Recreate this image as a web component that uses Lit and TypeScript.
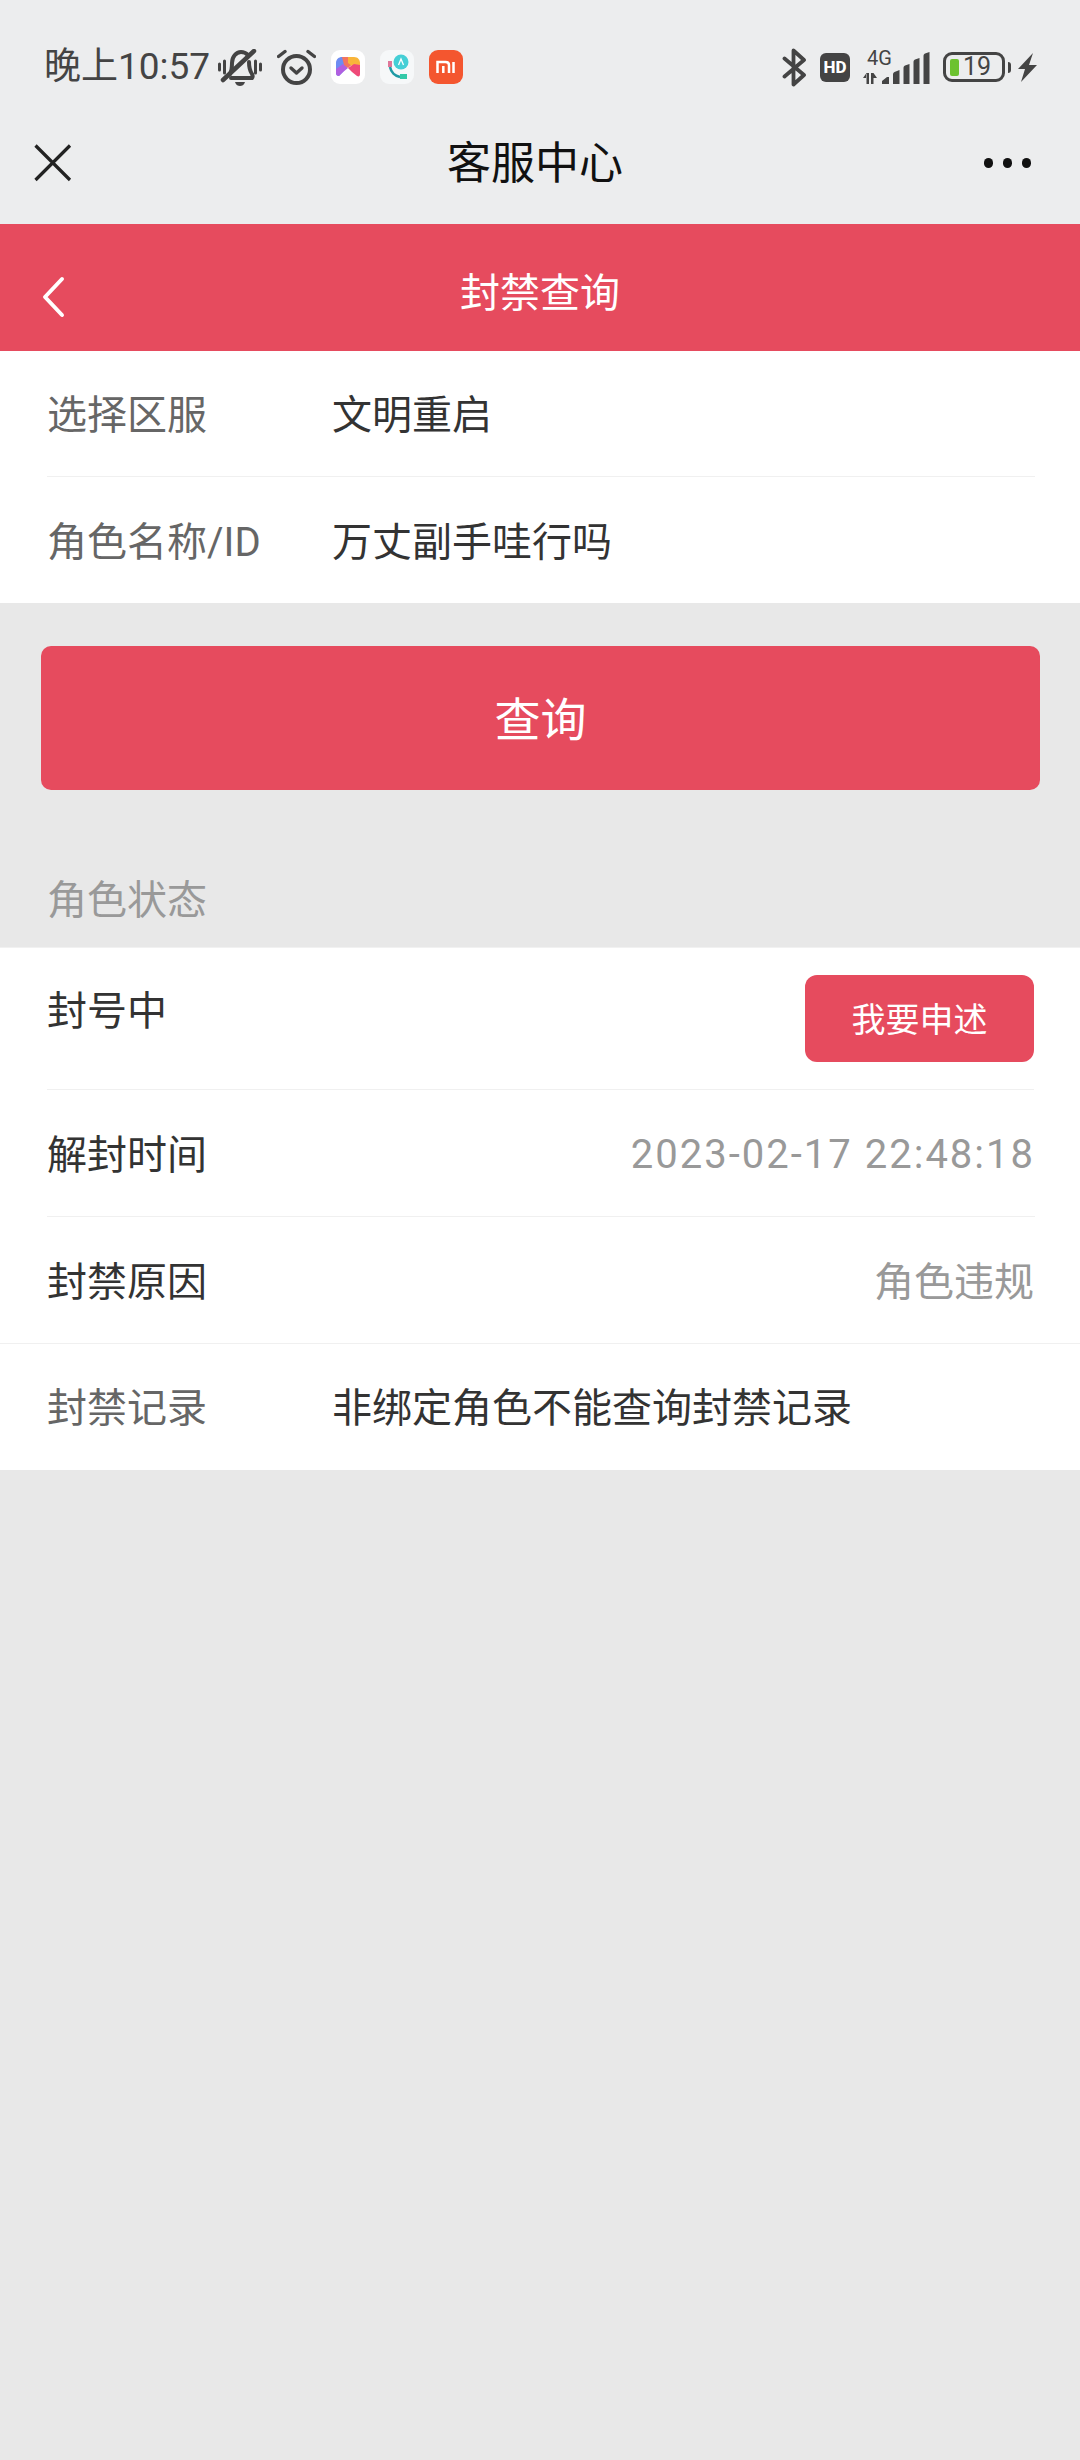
import { LitElement, html, css, svg } from 'lit';
import { customElement } from 'lit/decorators.js';

const statusRows = [
  { label: '解封时间', value: '2023-02-17 22:48:18', cls: 'date' },
  { label: '封禁原因', value: '角色违规', cls: '' },
];

const bellOff = svg`<svg class="ic" width="44" height="37" viewBox="0 0 44 37" fill="none" stroke="#444" stroke-linecap="round">
  <path d="M1.500 15v6M6.500 12v12M37.500 12v12M42.500 15v6" stroke-width="3"/>
  <path d="M12 25c2-4 2-7 2-11 0-6 4-11 9-11 3 0 5 1 7 3M31 13c0 5 1 9 3 12 1 2 1 3 0 4H13" stroke-width="4"/>
  <path d="M5 31 36 2" stroke-width="4.500"/>
  <path d="M17 33h10c-1 3-3 4-5 4s-4-1-5-4z" fill="#444" stroke="none"/>
</svg>`;

const alarm = svg`<svg class="ic" width="39" height="36" viewBox="0 0 39 36" fill="none" stroke="#444" stroke-linecap="round" stroke-linejoin="round">
  <circle cx="19.500" cy="20.500" r="13.500" stroke-width="4"/>
  <path d="M1.500 7.500 8 2.500M37.500 7.500 31 2.500" stroke-width="3.400"/>
  <path d="M14 19l5.500 5 5.500-5" stroke-width="3.400"/>
</svg>`;

const gameApp = svg`<svg class="ic" width="34" height="34" viewBox="0 0 34 34">
  <rect width="34" height="34" rx="9" fill="#fff"/>
  <path d="M5 13c0-4 3-6 6-6h3l2 10-4 5-4 4c-2 0-3-1-3-3z" fill="#6d8cf2"/>
  <path d="M5 19l7-5 5 4-5 4-4 4c-2 0-3-1-3-3z" fill="#b05fe0"/>
  <path d="M11 7h9l3 6-6 5-4-3z" fill="#f3745f"/>
  <path d="M17 7h6c4 0 6 3 6 6v2l-8 1-4-3z" fill="#f9b53a"/>
  <path d="M17 18l6-4 6 1v9c0 2-1 3-3 2l-5-4z" fill="#ef4a78"/>
</svg>`;

const phoneApp = svg`<svg class="ic" width="34" height="34" viewBox="0 0 34 34" fill="none">
  <rect width="34" height="34" rx="9" fill="#f6f8f9"/>
  <circle cx="21" cy="12" r="7.500" fill="#45cfd6"/>
  <path d="M18.500 15l2.500-6 2.500 6" stroke="#fff" stroke-width="1.300"/>
  <path d="M8 11h4v6H8z" fill="#e0789a"/>
  <path d="M10 17c1 5 5 9 10 10" stroke="#1f9aa5" stroke-width="2.600"/>
  <path d="M20 24h7v5h-7z" fill="#33c9a8"/>
</svg>`;

const miApp = svg`<svg class="ic" width="34" height="34" viewBox="0 0 34 34" fill="none">
  <rect width="34" height="34" rx="9" fill="#f4562f"/>
  <path d="M8.500 23V12h8c2 0 3.500 1 3.500 3v8M14.300 16v7M24.500 12v11" stroke="#fff" stroke-width="2.500"/>
</svg>`;

const bluetooth = svg`<svg class="ic" width="25" height="39" viewBox="0 0 25 39" fill="none" stroke="#444" stroke-width="3.800" stroke-linecap="round" stroke-linejoin="round">
  <path d="M2.500 10.500 22 27 11.500 36.500V2.500L22 12 2.500 28.500"/>
</svg>`;

const signal = svg`<svg class="ic" width="67" height="36" viewBox="0 0 67 36" fill="#444">
  <path d="M3 29h-3l3.500-5H3zM3.500 24h2.500v11H3.500zM8 24h2.500v11H8zM10.500 24l3.500 5h-3.500z"/>
  <path d="M19 35v-3l5-4h2v7zM30 35v-9.500c0-1 .5-2 1.500-2.500l5-2v14zM40.500 35V19c0-1 .5-2 1.500-2.500l4.500-1.500v20zM50.500 35V13c0-1 .5-2 1.500-2.500l4.500-1.500v26zM60.500 35V7c0-1 .5-2 1.500-2.500L66.500 3v32z"/>
</svg>`;

const bolt = svg`<svg class="ic" width="19" height="29" viewBox="0 0 19 29"><path d="M15 0 0 16h7L3 29l16-17h-8z" fill="#444"/></svg>`;

@customElement('app-root')
class AppRoot extends LitElement {
  static styles = css`
    :host {
      display: block;
      width: 1080px;
      min-height: 2460px;
      background: #e8e8e8;
      font-family: Roboto, "Noto Sans CJK SC", sans-serif;
      color: #333;
    }

    .ic {
      display: block;
      flex: none;
    }

    .top {
      background: #ecedee;
    }

    .status {
      box-sizing: border-box;
      height: 102px;
      padding: 32px 43px 0 44px;
      display: flex;
      align-items: center;
      justify-content: space-between;
    }

    .status-left,
    .status-right {
      display: flex;
      align-items: center;
      gap: 15px;
    }

    .time {
      width: 164px;
      margin-right: -5px;
      font-size: 37px;
      line-height: 40px;
      color: #444;
      white-space: nowrap;
    }

    .status-right {
      gap: 13px;
    }

    .hd {
      width: 30px;
      height: 29px;
      display: flex;
      align-items: center;
      justify-content: center;
      border-radius: 6px;
      background: #444;
      color: #fff;
      font-size: 17px;
      font-weight: 800;
      line-height: 29px;
    }

    .net {
      position: relative;
    }

    .net-label {
      position: absolute;
      left: 4px;
      top: -1px;
      font-size: 20px;
      line-height: 20px;
      color: #444;
    }

    .battery {
      display: flex;
      align-items: center;
      gap: 3px;
    }

    .battery-case {
      box-sizing: border-box;
      width: 62px;
      height: 30px;
      padding: 0 4px;
      display: flex;
      align-items: center;
      gap: 4px;
      border: 3px solid #444;
      border-radius: 9px;
      font-size: 25px;
      line-height: 24px;
      color: #444;
    }

    .battery-level {
      width: 9px;
      height: 17px;
      border-radius: 2px;
      background: #6cc22f;
    }

    .battery-tip {
      width: 3px;
      height: 11px;
      border-radius: 0 3px 3px 0;
      background: #444;
    }

    .status-right .tight {
      margin-left: -6px;
    }

    .nav {
      box-sizing: border-box;
      height: 122px;
      padding: 0 49px 0 33px;
      display: grid;
      grid-template-columns: 1fr auto 1fr;
      align-items: center;
    }

    .nav-title {
      margin-left: 6px;
      padding-bottom: 6px;
      font-size: 44px;
      color: #111;
    }

    .dots {
      justify-self: end;
      display: flex;
      gap: 9.500px;
    }

    .dots span {
      width: 9.500px;
      height: 9.500px;
      border-radius: 50%;
      background: #111;
    }

    .header {
      box-sizing: border-box;
      height: 127px;
      padding: 5px 41px 0;
      display: grid;
      grid-template-columns: 1fr auto 1fr;
      align-items: center;
      background: #e64b5e;
      color: #fff;
    }

    .header-title {
      font-size: 40px;
    }

    .back {
      margin-top: 14px;
    }

    .panel {
      background: #fff;
    }

    .row {
      box-sizing: border-box;
      height: 126px;
      margin: 0 45px 0 47px;
      padding-bottom: 3px;
      display: flex;
      align-items: center;
      font-size: 40px;
      border-bottom: 1px solid #f0f0f0;
    }

    .row.last {
      border-bottom: none;
    }

    .label {
      flex: none;
      width: 285px;
      color: #666;
    }

    .action-wrap {
      padding: 43px 40px 0 41px;
    }

    .action {
      box-sizing: border-box;
      height: 144px;
      padding-bottom: 4px;
      display: flex;
      align-items: center;
      justify-content: center;
      border-radius: 10px;
      background: #e64b5e;
      color: #fff;
      font-size: 46px;
    }

    .section-title {
      height: 157px;
      box-sizing: border-box;
      padding: 83px 47px 0;
      font-size: 40px;
      line-height: 56px;
      color: #999;
    }

    .status-panel {
      border-top: 1px solid #f1f1f1;
    }

    .row.ban {
      height: 142px;
      padding-bottom: 0;
      align-items: flex-start;
      justify-content: space-between;
      margin-right: 46px;
    }

    .ban-text {
      margin-top: 36px;
      line-height: 56px;
    }

    .appeal {
      box-sizing: border-box;
      margin-top: 27px;
      width: 229px;
      height: 87px;
      padding-bottom: 2px;
      display: flex;
      align-items: center;
      justify-content: center;
      border-radius: 12px;
      background: #e64b5e;
      color: #fff;
      font-size: 34px;
    }

    .row.info {
      height: 127px;
      justify-content: space-between;
    }

    .row.info.last {
      height: 126px;
      margin-right: 46px;
    }

    .row.records {
      height: 126px;
      padding-bottom: 4px;
      justify-content: flex-start;
    }

    .muted {
      color: #999;
    }

    .date {
      margin-top: 5px;
      letter-spacing: 2px;
    }

    .records-wrap {
      border-top: 1px solid #f0f0f0;
    }
  `;

  render() {
    return html`
      <div class="top">
        <div class="status">
          <div class="status-left">
            <div class="time">晚上10:57</div>
            ${bellOff}${alarm}${gameApp}${phoneApp}${miApp}
          </div>
          <div class="status-right">
            ${bluetooth}
            <div class="hd">HD</div>
            <div class="net"><span class="net-label">4G</span>${signal}</div>
            <div class="battery">
              <div class="battery-case"><span class="battery-level"></span><span>19</span></div>
              <span class="battery-tip"></span>
            </div>
            <span class="tight">${bolt}</span>
          </div>
        </div>
        <div class="nav">
          <svg class="ic" width="40" height="40" viewBox="0 0 40 40" fill="none" stroke="#222" stroke-width="3.200">
            <path d="M2.500 2.500 37 37M37 2.500 2.500 37"/>
          </svg>
          <div class="nav-title">客服中心</div>
          <div class="dots"><span></span><span></span><span></span></div>
        </div>
      </div>

      <div class="header">
        <svg class="ic back" width="24" height="42" viewBox="0 0 24 42" fill="none" stroke="#fff" stroke-width="4" stroke-linecap="round" stroke-linejoin="round">
          <path d="M21 3 4 21l17 18"/>
        </svg>
        <div class="header-title">封禁查询</div>
      </div>

      <div class="panel">
        <div class="row"><span class="label">选择区服</span><span>文明重启</span></div>
        <div class="row last"><span class="label">角色名称/ID</span><span>万丈副手哇行吗</span></div>
      </div>

      <div class="action-wrap"><div class="action">查询</div></div>

      <div class="section-title">角色状态</div>

      <div class="panel status-panel">
        <div class="row ban">
          <span class="ban-text">封号中</span>
          <div class="appeal">我要申述</div>
        </div>
        ${statusRows.map(
          (r, i) => html`
            <div class="row info ${i === statusRows.length - 1 ? 'last' : ''}">
              <span>${r.label}</span>
              <span class="muted ${r.cls}">${r.value}</span>
            </div>
          `
        )}
        <div class="records-wrap">
          <div class="row records last">
            <span class="label">封禁记录</span><span>非绑定角色不能查询封禁记录</span>
          </div>
        </div>
      </div>
    `;
  }
}
